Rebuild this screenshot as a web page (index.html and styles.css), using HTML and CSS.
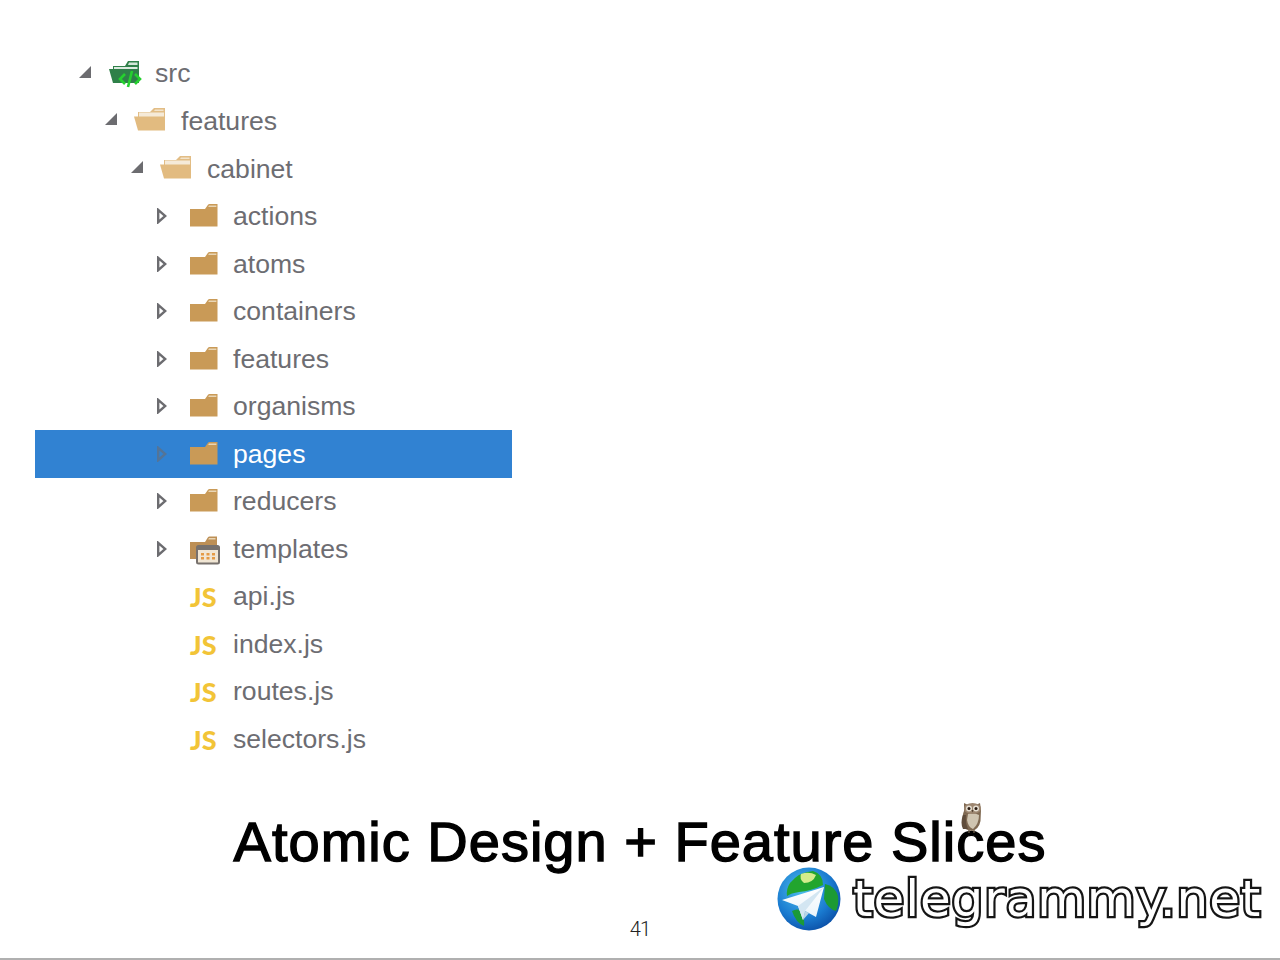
FILE: index.html
```html
<!DOCTYPE html>
<html lang="en">
<head>
<meta charset="utf-8">
<title>Atomic Design + Feature Slices</title>
<link rel="stylesheet" href="styles.css">
</head>
<body>
<svg class="defs" width="0" height="0" aria-hidden="true">
  <defs>
    <symbol id="arrow-open" viewBox="0 0 14 14"><path d="M13 1V13H1Z" fill="#6c6c70"/></symbol>
    <symbol id="arrow-closed" viewBox="0 0 10 16"><path d="M1.200 1.800L8.300 8L1.200 14.200Z" fill="none" stroke="#6c6c70" stroke-width="2.400"/></symbol>
    <symbol id="folder" viewBox="0 0 28 24"><path d="M0 6H15L18 1.800Q18.500 1 19.500 1H27.500V23.500H0Z" fill="#c99a57"/><path d="M19 2.600H26.400V4H18.200Z" fill="#e9d6b6"/></symbol>
    <symbol id="folder-open" viewBox="0 0 32 24"><path d="M4 5H16L20 1H31V22H4Z" fill="#e2bd85"/><path d="M21 2.500H29.500V4H20Z" fill="#f3e4cb"/><path d="M5 5.500H30V10H5Z" fill="#f5ead8"/><path d="M0 9.500H31V23.500H4Z" fill="#e2bb80"/></symbol>
    <symbol id="folder-src" viewBox="0 0 34 28"><path d="M5 6H17L20 1H31V21H5Z" fill="#2f8049"/><path d="M21 2.600H29.500V5H20Z" fill="#d3e6d8"/><path d="M6 7H29.500V9.500H6Z" fill="#dcebe0"/><path d="M1 9H31V23H5Z" fill="#2f8049"/><path d="M17 14L12 19L17 24M27 14L32 19L27 24M24 11L20 27" fill="none" stroke="#25d02f" stroke-width="2.600"/></symbol>
    <symbol id="folder-cal" viewBox="0 0 30 30"><path d="M0 7H15L18 2.300Q18.500 1.500 19.500 1.500H27V24H0Z" fill="#bd8f55"/><path d="M19 3H25.500V4.500H18.200Z" fill="#e9d6b6"/><rect x="7" y="11" width="22" height="17.500" rx="1.500" fill="#f1e6d4" stroke="#77716d" stroke-width="2"/><path d="M7 11H29V15H7Z" fill="#77716d"/><path d="M11 18h3v2.500h-3zM16.500 18h3v2.500h-3zM22 18h3v2.500h-3zM11 22h3v2.500h-3zM16.500 22h3v2.500h-3zM22 22h3v2.500h-3z" fill="#e59a45"/></symbol>
  </defs>
</svg>

<main class="slide">
  <ul class="tree">
    <li class="row level-0"><svg class="arrow arrow-down"><use href="#arrow-open"/></svg><span class="icon"><svg class="ico-src"><use href="#folder-src"/></svg></span><span class="name">src</span></li>
    <li class="row level-1"><svg class="arrow arrow-down"><use href="#arrow-open"/></svg><span class="icon"><svg class="ico-open"><use href="#folder-open"/></svg></span><span class="name">features</span></li>
    <li class="row level-2"><svg class="arrow arrow-down"><use href="#arrow-open"/></svg><span class="icon"><svg class="ico-open"><use href="#folder-open"/></svg></span><span class="name">cabinet</span></li>
    <li class="row level-3"><svg class="arrow arrow-right"><use href="#arrow-closed"/></svg><span class="icon"><svg class="ico-folder"><use href="#folder"/></svg></span><span class="name">actions</span></li>
    <li class="row level-3"><svg class="arrow arrow-right"><use href="#arrow-closed"/></svg><span class="icon"><svg class="ico-folder"><use href="#folder"/></svg></span><span class="name">atoms</span></li>
    <li class="row level-3"><svg class="arrow arrow-right"><use href="#arrow-closed"/></svg><span class="icon"><svg class="ico-folder"><use href="#folder"/></svg></span><span class="name">containers</span></li>
    <li class="row level-3"><svg class="arrow arrow-right"><use href="#arrow-closed"/></svg><span class="icon"><svg class="ico-folder"><use href="#folder"/></svg></span><span class="name">features</span></li>
    <li class="row level-3"><svg class="arrow arrow-right"><use href="#arrow-closed"/></svg><span class="icon"><svg class="ico-folder"><use href="#folder"/></svg></span><span class="name">organisms</span></li>
    <li class="row level-3 selected"><svg class="arrow arrow-right"><use href="#arrow-closed"/></svg><span class="icon"><svg class="ico-folder"><use href="#folder"/></svg></span><span class="name">pages</span></li>
    <li class="row level-3"><svg class="arrow arrow-right"><use href="#arrow-closed"/></svg><span class="icon"><svg class="ico-folder"><use href="#folder"/></svg></span><span class="name">reducers</span></li>
    <li class="row level-3"><svg class="arrow arrow-right"><use href="#arrow-closed"/></svg><span class="icon"><svg class="ico-cal"><use href="#folder-cal"/></svg></span><span class="name">templates</span></li>
    <li class="row level-3"><span class="arrow"></span><span class="icon"><span class="js">JS</span></span><span class="name">api.js</span></li>
    <li class="row level-3"><span class="arrow"></span><span class="icon"><span class="js">JS</span></span><span class="name">index.js</span></li>
    <li class="row level-3"><span class="arrow"></span><span class="icon"><span class="js">JS</span></span><span class="name">routes.js</span></li>
    <li class="row level-3"><span class="arrow"></span><span class="icon"><span class="js">JS</span></span><span class="name">selectors.js</span></li>
  </ul>
  <h1 class="title">Atomic Design + Feature Slices</h1>
  <div class="page-number">41</div>

  <svg class="owl" viewBox="0 0 22 34" aria-hidden="true">
    <path d="M3 2L7 4H15L19 2L20 9L19.500 20Q18 28 11 30Q3 29 1 24Q1 14 3 10Z" fill="#7f6952"/>
    <path d="M7 13Q13 11 18 14Q18 23 12 28Q7 26 6 19Z" fill="#cfc4b0"/>
    <path d="M2 14Q-1 22 2 28L7 28Q4 21 5 14Z" fill="#5f4c3b"/>
    <ellipse cx="11.500" cy="7.500" rx="8.500" ry="5.500" fill="#9c8670"/>
    <circle cx="8" cy="7.500" r="3" fill="#e6dfd2"/><circle cx="15" cy="7.500" r="3" fill="#e6dfd2"/>
    <circle cx="8" cy="7.500" r="1.500" fill="#2a1c12"/><circle cx="15" cy="7.500" r="1.500" fill="#2a1c12"/>
    <path d="M10.500 9H12.500L11.500 11.500Z" fill="#4b3a2b"/>
    <path d="M8 29V32M13 29V32" stroke="#6b5b48" stroke-width="1.300"/>
  </svg>

  <div class="watermark">
    <svg class="globe" viewBox="0 0 64 64" aria-hidden="true">
      <defs>
        <radialGradient id="sea" cx="0.400" cy="0.350" r="0.700">
          <stop offset="0" stop-color="#4fc0ee"/><stop offset="0.650" stop-color="#1a7bd0"/><stop offset="1" stop-color="#0b4fa6"/>
        </radialGradient>
        <linearGradient id="plane" x1="0" y1="0" x2="0" y2="1">
          <stop offset="0" stop-color="#fff"/><stop offset="1" stop-color="#e8f3fa"/>
        </linearGradient>
      </defs>
      <circle cx="32" cy="32" r="31.500" fill="url(#sea)"/>
      <path d="M13 16Q22 5 36 4Q46 7 46 18Q34 24 22 25Q14 26 10 29Q9 22 13 16Z" fill="#22a52e"/>
      <path d="M24 7Q32 4 39 8Q36 16 27 16Q22 12 24 7Z" fill="#d4ec8c"/>
      <path d="M48 17Q58 19 61 29Q62 38 59 44Q51 42 47 32Z" fill="#1c9a33"/>
      <path d="M15 44Q22 40 25 46Q28 54 27 59Q19 56 15 44Z" fill="#1b9a38"/>
      <path d="M5 33L47 20L39 50L28 44L26 53L21 39Z" fill="url(#plane)"/>
      <path d="M21 39L47 20L28 44L26 53Z" fill="#d3e6f2"/>
      <path d="M28 44L26 53L32 46Z" fill="#b9d5e6"/>
    </svg>
    <span class="brand">telegrammy.net</span>
  </div>
</main>
</body>
</html>
```
FILE: styles.css
```css
* { box-sizing: border-box; }
html, body { margin: 0; padding: 0; background: #fff; overflow: hidden; }
.defs { position: absolute; }

.slide {
  position: relative;
  display: flex;
  flex-direction: column;
  align-items: center;
  width: 1280px;
  height: 960px;
  padding-top: 50px;
  border-bottom: 2px solid #b0b0b0;
  font-family: "Liberation Sans", Arial, sans-serif;
}

.tree {
  align-self: flex-start;
  width: 477px;
  margin: 0 0 0 35px;
  padding: 0;
  list-style: none;
}
.row {
  display: flex;
  align-items: center;
  height: 47.5px;
  font-size: 26.6px;
  color: #6d6d72;
}
.level-0 { padding-left: 43px; }
.level-1 { padding-left: 69px; }
.level-2 { padding-left: 95px; }
.level-3 { padding-left: 121px; }
.selected { background: #3182d2; color: #fff; }
.selected .arrow { opacity: 0.6; }

.arrow { flex: none; width: 14px; height: 14px; }
.arrow-down { margin-top: -4px; }
.arrow-right { width: 10px; height: 16px; margin: 0 3px 0 1px; }
.icon {
  flex: none;
  display: flex;
  align-items: center;
  width: 63px;
  height: 100%;
  padding-left: 16px;
}
.level-3 .icon { padding-left: 20px; }
.name { white-space: nowrap; padding-top: 1px; }
.level-0 .name, .level-1 .name { padding-top: 0; }

.ico-src { width: 34px; height: 28px; }
.ico-open { width: 32px; height: 24px; margin-top: -4px; }
.ico-folder { width: 28px; height: 24px; margin-top: -2px; }
.ico-cal { width: 30px; height: 30px; margin-top: 2px; }
.js { font-family: Lato, sans-serif; font-weight: 900; font-size: 27px; color: #f2c437; margin-top: 1px; }

.title {
  margin: 47px 0 0;
  font-size: 56px;
  line-height: 64px;
  font-weight: 400;
  letter-spacing: 1px;
  -webkit-text-stroke: 1.4px #000;
  color: #000;
  white-space: nowrap;
}
.page-number {
  margin-top: 44px;
  font-family: Roboto, sans-serif;
  font-weight: 300;
  font-size: 20px;
  line-height: 22px;
  letter-spacing: -0.8px;
  color: #222;
}

.owl { position: absolute; left: 961px; top: 801px; width: 22px; height: 34px; }
.watermark {
  position: absolute;
  left: 777px;
  top: 867px;
  display: flex;
  align-items: center;
  gap: 12px;
}
.globe { width: 64px; height: 64px; flex: none; }
.brand {
  font-family: "DejaVu Sans", sans-serif;
  font-size: 50px;
  line-height: 64px;
  font-weight: 400;
  letter-spacing: 0.9px;
  color: #fff;
  -webkit-text-stroke: 4.5px #151515;
  paint-order: stroke fill;
  white-space: nowrap;
}
```
